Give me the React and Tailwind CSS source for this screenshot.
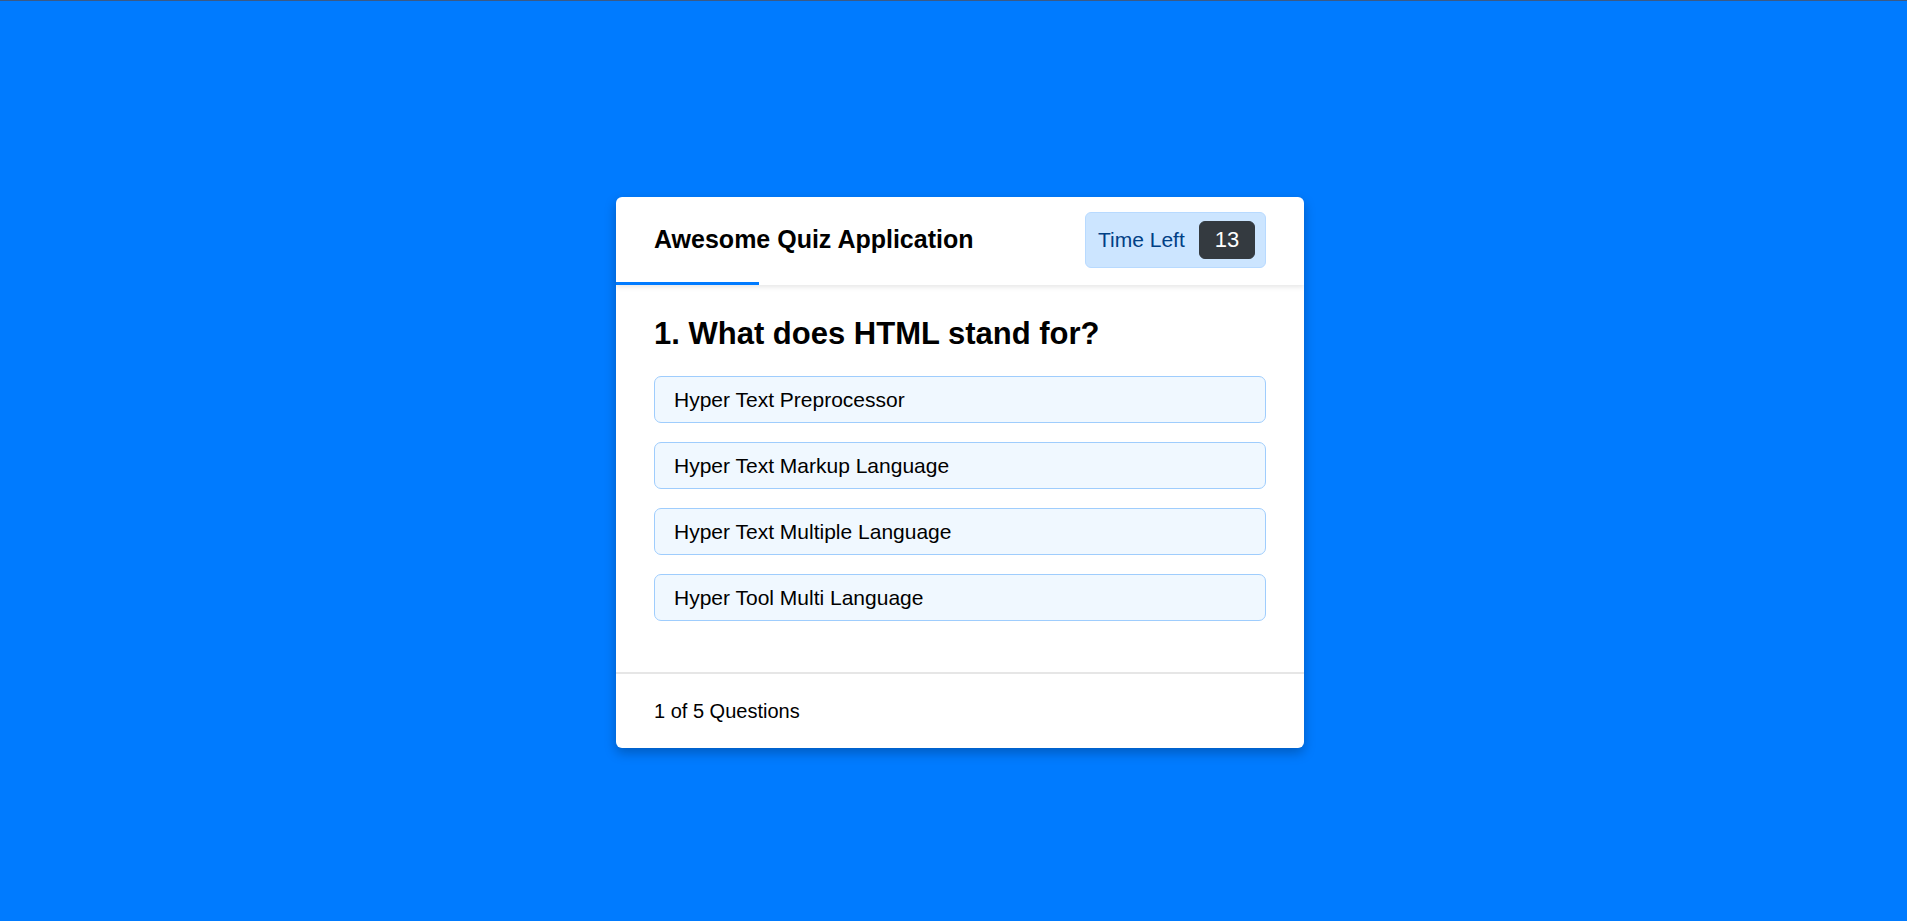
const OPTIONS = [
  'Hyper Text Preprocessor',
  'Hyper Text Markup Language',
  'Hyper Text Multiple Language',
  'Hyper Tool Multi Language',
]

export default function App() {
  return (
    <div
      className="min-h-[921px] bg-[#007bff] border-t border-[#3b5a86] flex justify-center pl-[13px] pt-[196px]"
      style={{ fontFamily: '"Liberation Sans", Arial, sans-serif' }}
    >
      <div className="w-[688px] h-[551px] bg-white rounded-[6px] shadow-[0_5px_12px_rgba(0,0,0,0.25)] flex flex-col overflow-hidden">
        {/* Header */}
        <div className="relative z-10 h-[88px] flex-shrink-0 flex flex-col shadow-[0_2px_5px_rgba(0,0,0,0.1)]">
          <div className="flex-1 flex items-center justify-between px-[38px]">
            <div className="text-[25px] font-bold text-black">Awesome Quiz Application</div>
            <div className="h-[56px] w-[181px] flex items-center justify-between pl-[12px] pr-[10px] bg-[#cce5ff] border border-[#b8daff] rounded-[6px]">
              <span className="text-[21px] text-[#004085]">Time Left</span>
              <span className="h-[38px] w-[56px] flex items-center justify-center bg-[#343a40] border border-[#343a40] rounded-[6px] text-white text-[22px] font-medium">
                13
              </span>
            </div>
          </div>
          <div className="h-[3px] w-[143px] bg-[#007bff]" />
        </div>

        {/* Section */}
        <div className="flex-1 px-[38px] pt-[30px]">
          <h2 className="text-[31px] font-bold text-black leading-[38px]">1. What does HTML stand for?</h2>
          <div className="pt-[23px] flex flex-col gap-[19px]">
            {OPTIONS.map((o, i) => (
              <div
                key={i}
                className="h-[47px] flex items-center px-[19px] bg-[#f0f8ff] border border-[#9fcdfd] rounded-[7px] text-[21px] text-black"
              >
                {o}
              </div>
            ))}
          </div>
        </div>

        {/* Footer */}
        <div className="h-[76px] flex-shrink-0 border-t-2 border-[#e6e6e6] flex items-center px-[38px]">
          <span className="text-[20px] text-black">1 of 5 Questions</span>
        </div>
      </div>
    </div>
  )
}
